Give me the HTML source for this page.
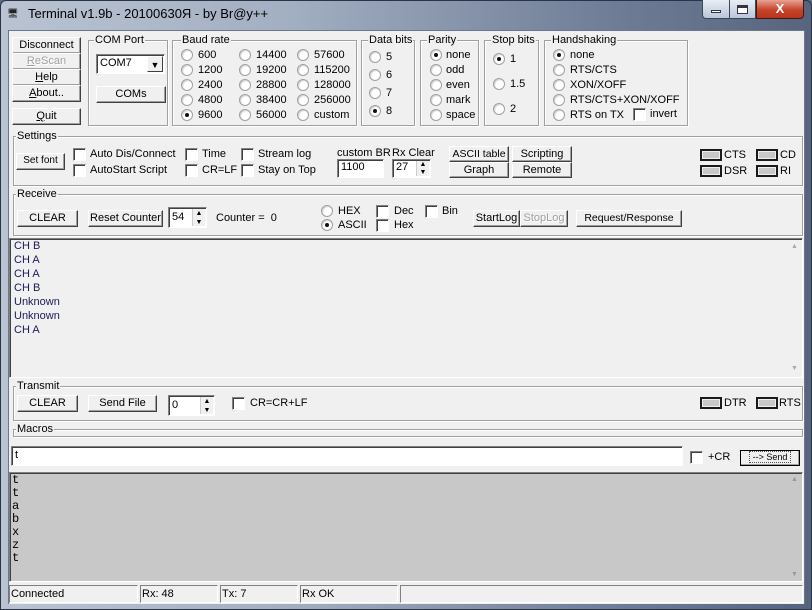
<!DOCTYPE html>
<html><head><meta charset="utf-8"><style>
*{box-sizing:border-box}
body{margin:0;width:812px;height:610px;overflow:hidden;background:#5d6c86;font-family:"Liberation Sans",sans-serif;font-size:11px;color:#000;position:relative}
.a{position:absolute}
#frame{left:0;top:0;width:812px;height:610px;background:linear-gradient(to right,#b9c3d2 0%,#a3afc2 35%,#6f7d97 75%,#56647e 100%);border-radius:6px 6px 0 0;border:1px solid #2b3445}
#client{left:8px;top:30px;width:797px;height:574px;background:#f0f0f0;border:1px solid #6b778c}
.t{position:absolute;white-space:nowrap;line-height:14px}
.btn{position:absolute;background:#f0f0f0;border:1px solid;border-color:#fff #404040 #404040 #fff;box-shadow:inset -1px -1px 0 #a0a0a0;text-align:center;line-height:14px;white-space:nowrap}
.grp{position:absolute;border:1px solid #a0a0a0;box-shadow:1px 1px 0 #fff,inset 1px 1px 0 #fff}
.gl{position:absolute;background:#f0f0f0;padding:0 1px;line-height:12px;top:-7px;left:5px;white-space:nowrap}
.r{position:absolute;width:12px;height:12px;border-radius:50%;background:#fff;border:1px solid #a0a0a0;box-shadow:inset 1px 1px 1px #d0d0d0}
.r.on::after{content:"";position:absolute;left:3px;top:3px;width:4px;height:4px;border-radius:50%;background:#111}
.c{position:absolute;width:13px;height:13px;background:#fff;border:1px solid;border-color:#808080 #fff #fff #808080;box-shadow:inset 1px 1px 0 #404040}
.in{position:absolute;background:#fff;border:1px solid;border-color:#808080 #fff #fff #808080;box-shadow:inset 1px 1px 0 #404040;padding-left:3px;line-height:15px}
.spin{position:absolute;right:1px;top:1px;bottom:1px;width:13px;background:#f0f0f0;font-size:7px;text-align:center;line-height:8px;border-left:1px solid #ccc}
.led{position:absolute;width:22px;height:12px;background:#1a1a1a;padding:2px}
.led i{display:block;width:100%;height:100%;background:#c8c8c8;border:1px solid #eee}
.dis{color:#a0a0a0;text-shadow:1px 1px 0 #fff}
.sunk{position:absolute;border:1px solid;border-color:#808080 #fff #fff #808080;box-shadow:inset 1px 1px 0 #404040}
</style></head><body>
<div id="frame" class="a"></div>
<div class="t" style="left:7px;top:6px;width:16px;height:16px;font-size:9px;color:#222">🖥</div>
<div class="t" style="left:28px;top:7px;font-size:13px;color:#000">Terminal v1.9b - 20100630Я - by Br@y++</div>
<div class="a" style="left:702px;top:0;width:54px;height:19px;border:1px solid #3b475c;border-top:none;border-radius:0 0 0 4px;background:linear-gradient(#e9eef5,#b9c6d8)"></div>
<div class="a" style="left:729px;top:0;width:1px;height:19px;background:#3b475c"></div>
<div class="a" style="left:711px;top:10px;width:10px;height:3px;background:#fff;border:1px solid #334"></div>
<div class="a" style="left:737px;top:5px;width:11px;height:9px;border:1px solid #334;border-top:3px solid #334;background:#fff"></div>
<div class="a" style="left:756px;top:0;width:48px;height:19px;border:1px solid #3b1a14;border-top:none;border-radius:0 0 4px 0;background:linear-gradient(#e8a393,#c7432a 55%,#b8351e);color:#fff;font-weight:bold;font-size:13px;text-align:center;line-height:17px">X</div>
<div id="client" class="a"></div>

<div class="btn" style="left:12px;top:37px;width:69px;height:17px">Disconnect</div>
<div class="btn dis" style="left:12px;top:53px;width:69px;height:17px"><u>R</u>eScan</div>
<div class="btn" style="left:12px;top:69px;width:69px;height:17px"><u>H</u>elp</div>
<div class="btn" style="left:12px;top:85px;width:69px;height:17px"><u>A</u>bout..</div>
<div class="btn" style="left:12px;top:108px;width:69px;height:17px"><u>Q</u>uit</div>

<div class="grp" style="left:88px;top:40px;width:80px;height:86px"><span class="gl">COM Port</span></div>
<div class="in" style="left:96px;top:54px;width:69px;height:20px;line-height:17px">COM7<div class="spin" style="width:16px;font-size:9px;line-height:16px;border:1px solid;border-color:#fff #404040 #404040 #fff">▼</div></div>
<div class="btn" style="left:96px;top:86px;width:70px;height:17px">COMs</div>

<div class="grp" style="left:172px;top:40px;width:185px;height:86px"><span class="gl" style="left:8px">Baud rate</span></div>
<div class="r" style="left:181px;top:49px"></div><div class="t" style="left:198px;top:48px">600</div>
<div class="r" style="left:181px;top:64px"></div><div class="t" style="left:198px;top:63px">1200</div>
<div class="r" style="left:181px;top:79px"></div><div class="t" style="left:198px;top:78px">2400</div>
<div class="r" style="left:181px;top:94px"></div><div class="t" style="left:198px;top:93px">4800</div>
<div class="r on" style="left:181px;top:109px"></div><div class="t" style="left:198px;top:108px">9600</div>
<div class="r" style="left:239px;top:49px"></div><div class="t" style="left:256px;top:48px">14400</div>
<div class="r" style="left:239px;top:64px"></div><div class="t" style="left:256px;top:63px">19200</div>
<div class="r" style="left:239px;top:79px"></div><div class="t" style="left:256px;top:78px">28800</div>
<div class="r" style="left:239px;top:94px"></div><div class="t" style="left:256px;top:93px">38400</div>
<div class="r" style="left:239px;top:109px"></div><div class="t" style="left:256px;top:108px">56000</div>
<div class="r" style="left:297px;top:49px"></div><div class="t" style="left:314px;top:48px">57600</div>
<div class="r" style="left:297px;top:64px"></div><div class="t" style="left:314px;top:63px">115200</div>
<div class="r" style="left:297px;top:79px"></div><div class="t" style="left:314px;top:78px">128000</div>
<div class="r" style="left:297px;top:94px"></div><div class="t" style="left:314px;top:93px">256000</div>
<div class="r" style="left:297px;top:109px"></div><div class="t" style="left:314px;top:108px">custom</div>

<div class="grp" style="left:361px;top:40px;width:54px;height:86px"><span class="gl" style="left:6px">Data bits</span></div>
<div class="r" style="left:369px;top:51px"></div><div class="t" style="left:386px;top:50px">5</div>
<div class="r" style="left:369px;top:69px"></div><div class="t" style="left:386px;top:68px">6</div>
<div class="r" style="left:369px;top:87px"></div><div class="t" style="left:386px;top:86px">7</div>
<div class="r on" style="left:369px;top:105px"></div><div class="t" style="left:386px;top:104px">8</div>

<div class="grp" style="left:420px;top:40px;width:59px;height:86px"><span class="gl" style="left:6px">Parity</span></div>
<div class="r on" style="left:430px;top:49px"></div><div class="t" style="left:446px;top:48px">none</div>
<div class="r" style="left:430px;top:64px"></div><div class="t" style="left:446px;top:63px">odd</div>
<div class="r" style="left:430px;top:79px"></div><div class="t" style="left:446px;top:78px">even</div>
<div class="r" style="left:430px;top:94px"></div><div class="t" style="left:446px;top:93px">mark</div>
<div class="r" style="left:430px;top:109px"></div><div class="t" style="left:446px;top:108px">space</div>

<div class="grp" style="left:484px;top:40px;width:55px;height:86px"><span class="gl" style="left:6px">Stop bits</span></div>
<div class="r on" style="left:493px;top:53px"></div><div class="t" style="left:510px;top:52px">1</div>
<div class="r" style="left:493px;top:78px"></div><div class="t" style="left:510px;top:77px">1.5</div>
<div class="r" style="left:493px;top:103px"></div><div class="t" style="left:510px;top:102px">2</div>

<div class="grp" style="left:544px;top:40px;width:144px;height:86px"><span class="gl" style="left:6px">Handshaking</span></div>
<div class="r on" style="left:553px;top:49px"></div><div class="t" style="left:570px;top:48px">none</div>
<div class="r" style="left:553px;top:64px"></div><div class="t" style="left:570px;top:63px">RTS/CTS</div>
<div class="r" style="left:553px;top:79px"></div><div class="t" style="left:570px;top:78px">XON/XOFF</div>
<div class="r" style="left:553px;top:94px"></div><div class="t" style="left:570px;top:93px">RTS/CTS+XON/XOFF</div>
<div class="r" style="left:553px;top:109px"></div><div class="t" style="left:570px;top:108px">RTS on TX</div>
<div class="c" style="left:633px;top:108px"></div><div class="t" style="left:650px;top:107px">invert</div>

<div class="grp" style="left:13px;top:136px;width:790px;height:50px"><span class="gl" style="left:2px">Settings</span></div>
<div class="btn" style="left:16px;top:153px;width:49px;height:17px;font-size:10px">Set font</div>
<div class="c" style="left:73px;top:148px"></div><div class="t" style="left:90px;top:147px">Auto Dis/Connect</div>
<div class="c" style="left:73px;top:164px"></div><div class="t" style="left:90px;top:163px">AutoStart Script</div>
<div class="c" style="left:185px;top:148px"></div><div class="t" style="left:202px;top:147px">Time</div>
<div class="c" style="left:185px;top:164px"></div><div class="t" style="left:202px;top:163px">CR=LF</div>
<div class="c" style="left:241px;top:148px"></div><div class="t" style="left:258px;top:147px">Stream log</div>
<div class="c" style="left:241px;top:164px"></div><div class="t" style="left:258px;top:163px">Stay on Top</div>
<div class="t" style="left:337px;top:146px">custom BR</div>
<div class="in" style="left:337px;top:159px;width:47px;height:19px">1100</div>
<div class="t" style="left:392px;top:146px">Rx Clear</div>
<div class="in" style="left:392px;top:159px;width:39px;height:19px">27<div class="spin">▲<br>▼</div></div>
<div class="btn" style="left:449px;top:146px;width:60px;height:16px;font-size:10.5px">ASCII table</div>
<div class="btn" style="left:449px;top:162px;width:60px;height:16px">Graph</div>
<div class="btn" style="left:512px;top:146px;width:60px;height:16px">Scripting</div>
<div class="btn" style="left:512px;top:162px;width:60px;height:16px">Remote</div>
<div class="led" style="left:700px;top:149px"><i></i></div><div class="t" style="left:724px;top:148px">CTS</div>
<div class="led" style="left:756px;top:149px"><i></i></div><div class="t" style="left:780px;top:148px">CD</div>
<div class="led" style="left:700px;top:165px"><i></i></div><div class="t" style="left:724px;top:164px">DSR</div>
<div class="led" style="left:756px;top:165px"><i></i></div><div class="t" style="left:780px;top:164px">RI</div>

<div class="grp" style="left:13px;top:194px;width:790px;height:42px"><span class="gl" style="left:2px">Receive</span></div>
<div class="btn" style="left:17px;top:210px;width:61px;height:17px">CLEAR</div>
<div class="btn" style="left:88px;top:210px;width:75px;height:17px">Reset Counter</div>
<div class="in" style="left:168px;top:207px;width:39px;height:21px;line-height:18px">54<div class="spin" style="line-height:9px">▲<br>▼</div></div>
<div class="t" style="left:216px;top:211px">Counter =&nbsp; 0</div>
<div class="r" style="left:321px;top:205px"></div><div class="t" style="left:338px;top:204px">HEX</div>
<div class="r on" style="left:321px;top:219px"></div><div class="t" style="left:338px;top:218px">ASCII</div>
<div class="c" style="left:376px;top:205px"></div><div class="t" style="left:394px;top:204px">Dec</div>
<div class="c" style="left:376px;top:219px"></div><div class="t" style="left:394px;top:218px">Hex</div>
<div class="c" style="left:425px;top:205px"></div><div class="t" style="left:442px;top:204px">Bin</div>
<div class="btn" style="left:473px;top:210px;width:47px;height:17px">StartLog</div>
<div class="btn dis" style="left:520px;top:210px;width:48px;height:17px">StopLog</div>
<div class="btn" style="left:576px;top:210px;width:106px;height:17px;font-size:10.5px">Request/Response</div>

<div class="sunk" style="left:9px;top:238px;width:794px;height:140px;background:#f0f0f0"></div>
<div class="a" style="left:787px;top:240px;width:15px;height:136px;background:#f0f0f0;color:#aaa;font-size:7px;text-align:center;line-height:14px">▲<div style="position:absolute;bottom:0;width:15px">▼</div></div>
<div class="t" style="left:14px;top:239px;color:#1a1a5a;line-height:14px;font-size:11px">CH B<br>CH A<br>CH A<br>CH B<br>Unknown<br>Unknown<br>CH A</div>

<div class="grp" style="left:13px;top:386px;width:790px;height:35px"><span class="gl" style="left:2px">Transmit</span></div>
<div class="btn" style="left:17px;top:395px;width:61px;height:17px">CLEAR</div>
<div class="btn" style="left:88px;top:395px;width:69px;height:17px">Send File</div>
<div class="in" style="left:168px;top:395px;width:47px;height:21px;line-height:18px">0<div class="spin" style="line-height:9px">▲<br>▼</div></div>
<div class="c" style="left:232px;top:397px"></div><div class="t" style="left:250px;top:396px">CR=CR+LF</div>
<div class="led" style="left:700px;top:397px"><i></i></div><div class="t" style="left:724px;top:396px">DTR</div>
<div class="led" style="left:756px;top:397px"><i></i></div><div class="t" style="left:779px;top:396px">RTS</div>

<div class="grp" style="left:13px;top:429px;width:790px;height:8px"><span class="gl" style="left:2px">Macros</span></div>

<div class="in" style="left:11px;top:446px;width:672px;height:20px;line-height:17px">t</div>
<div class="c" style="left:690px;top:451px"></div><div class="t" style="left:708px;top:450px">+CR</div>
<div class="btn" style="left:740px;top:450px;width:60px;height:16px;font-size:9px;line-height:13px;border:1px solid #000"><span style="border:1px dotted #555;padding:0 3px">--&gt; Send</span></div>

<div class="sunk" style="left:9px;top:472px;width:794px;height:110px;background:#c8c8c8"></div>
<div class="t" style="left:12px;top:474px;font-family:'Liberation Mono',monospace;font-size:12px;line-height:13px">t<br>t<br>a<br>b<br>x<br>z<br>t</div>
<div class="a" style="left:787px;top:476px;width:15px;height:104px;color:#999;font-size:7px;text-align:center">▲<div style="position:absolute;bottom:2px;width:15px">▼</div></div>

<div class="a" style="left:9px;top:583px;width:795px;height:21px;background:#f0f0f0"></div>
<div class="sunk" style="left:9px;top:585px;width:129px;height:18px;box-shadow:none"><span class="t" style="left:1px;top:1px">Connected</span></div>
<div class="sunk" style="left:140px;top:585px;width:78px;height:18px;box-shadow:none"><span class="t" style="left:1px;top:1px">Rx: 48</span></div>
<div class="sunk" style="left:220px;top:585px;width:78px;height:18px;box-shadow:none"><span class="t" style="left:1px;top:1px">Tx: 7</span></div>
<div class="sunk" style="left:300px;top:585px;width:98px;height:18px;box-shadow:none"><span class="t" style="left:1px;top:1px">Rx OK</span></div>
<div class="sunk" style="left:400px;top:585px;width:403px;height:18px;box-shadow:none"></div>
</body></html>
